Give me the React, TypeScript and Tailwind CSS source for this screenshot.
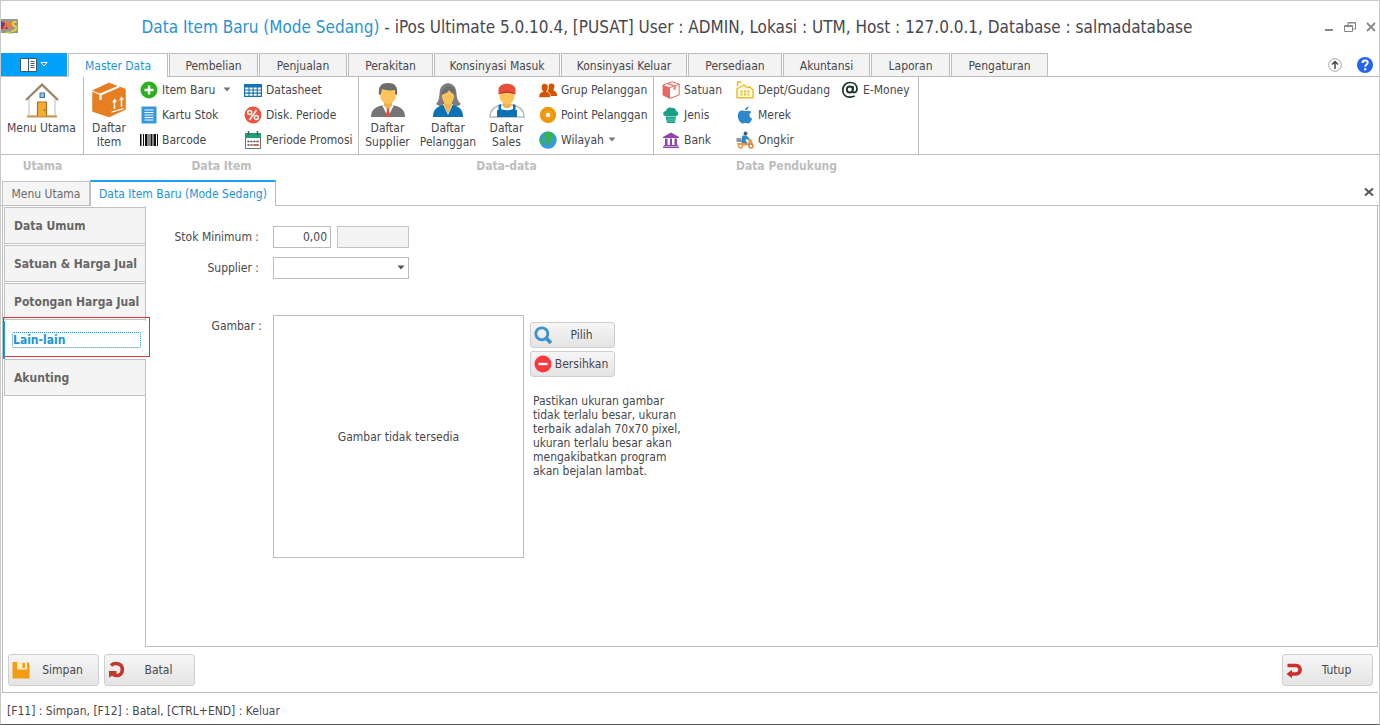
import type { ReactNode } from "react";
import { clsx } from "clsx";

/* ---------- icons ---------- */

function HomeIcon() {
  return (
    <svg viewBox="0 0 36 36" className="size-9" aria-hidden="true">
      <path d="M5 16v18h26V16L18 4z" fill="#fff" stroke="#b9bcc2" />
      <path d="M3 34.500h30" stroke="#c99a4b" strokeWidth="2" />
      <path d="M2 18 18 2.500 34 18" fill="none" stroke="#9c8468" strokeWidth="2.200" />
      <rect x="16" y="11" width="4.500" height="4.500" fill="#8fc4e6" stroke="#4d6f88" />
      <path d="M13.500 34V20h9v14" fill="#f6ad2f" stroke="#a9742a" strokeWidth="1.200" />
      <circle cx="20.500" cy="28" r=".8" fill="#7a5016" />
    </svg>
  );
}

function BoxIcon() {
  return (
    <svg viewBox="0 0 36 36" className="size-9" aria-hidden="true">
      <path d="M18 1.500 34 7.500V27L18 34.500 2 29V9z" fill="#e67e22" stroke="#e67e22" strokeWidth="1.500" strokeLinejoin="round" />
      <path d="M9.500 18v-5.500L28 4.500" fill="none" stroke="#fff" strokeWidth="2.200" />
      <path d="m1 9 8.500 3.500" stroke="#fff" strokeWidth="1.200" />
      <path d="M23.500 27v-8M30.500 25v-8" stroke="#fff" strokeWidth="1.500" />
      <path d="m21 20.500 2.500-4 2.500 3zM28 18.500l2.500-4 2.500 3zM20.500 29.500l12-3.500v1.300l-12 3.500z" fill="#fff" />
    </svg>
  );
}

function SupplierIcon() {
  return (
    <svg viewBox="0 0 36 36" className="size-9" aria-hidden="true">
      <path d="M1 35c0-8 5-10 12-12h10c7 2 12 4 12 12z" fill="#737577" />
      <path d="m12 23 6 12 6-12z" fill="#fff" />
      <path d="M16 25h4l-1 3 1.500 7h-5L17 28z" fill="#e04f3a" />
      <path d="M14 18h8v6l-4 3-4-3z" fill="#f1b04c" />
      <ellipse cx="18" cy="13" rx="8" ry="9" fill="#fdc45c" />
      <path d="M9 13C8 4 11 1 18 1s10 3 9 12l-2-1V8c-5 1-10 0-13-1l-1 5z" fill="#6a6d70" />
    </svg>
  );
}

function CustomerIcon() {
  return (
    <svg viewBox="0 0 36 36" className="size-9" aria-hidden="true">
      <path d="M6 22c4-4 3-9 4-14 2-9 14-9 16 0 1 5 0 10 5 14-3 3-7 3-9 1h-8c-2 2-6 1-8-1z" fill="#7c7e80" />
      <path d="M3 35c0-8 4-10 10-12h10c6 2 10 4 10 12z" fill="#0a72b5" />
      <path d="m13 22 5 11 5-11z" fill="#fff" />
      <path d="M14 18h8v6l-4 8-4-8z" fill="#f3b552" />
      <ellipse cx="18" cy="14" rx="6" ry="8" fill="#fdc45c" />
      <path d="M11 13C12 5 16 4 20 4c4 1 6 4 5 9-3-2-5-3-6-5-1 3-5 4-8 5z" fill="#6d6f71" />
    </svg>
  );
}

function SalesIcon() {
  return (
    <svg viewBox="0 0 36 36" className="size-9" aria-hidden="true">
      <path d="M1 35c0-8 5-11 12-12h10c7 1 12 4 12 12z" fill="#fff" stroke="#b7bcc2" strokeWidth="1.500" />
      <path d="M8 35V28h1.500v-5l2.500-1v5c3 1.500 9 1.500 12 0v-5l2.500 1v5H28v7z" fill="#0a72b5" />
      <path d="M14 18h8v6c-2 3-6 3-8 0z" fill="#f1b04c" />
      <ellipse cx="18" cy="14" rx="7.500" ry="8.500" fill="#fdc45c" />
      <path d="M9.500 11V7C11 0 25 0 26.500 7v4c-5-1.500-12-1.500-17 0z" fill="#e8503a" />
      <path d="M9.500 11c5-2 12-2 17 0v1.500c-5-2-12-2-17 0z" fill="#c23b28" />
    </svg>
  );
}

function AddIcon() {
  return (
    <svg viewBox="0 0 18 18" className="size-[18px]" aria-hidden="true">
      <circle cx="9" cy="9" r="8.500" fill="#2cb01d" />
      <path d="M9 4.500v9M4.500 9h9" stroke="#fff" strokeWidth="2.400" />
    </svg>
  );
}

function StockCardIcon() {
  return (
    <svg viewBox="0 0 18 18" className="size-[18px]" aria-hidden="true">
      <path d="M1.500.5h15v17h-15z" fill="#3498db" />
      <path d="M4.500 4h9M4.500 6.500h9M4.500 9h9M4.500 11.500h9M4.500 14h9" stroke="#fff" />
    </svg>
  );
}

function BarcodeIcon() {
  return (
    <svg viewBox="0 0 18 18" className="size-[18px]" aria-hidden="true">
      <path d="M0 3h1.500v12H0zM3 3h1v12H3zM5 3h2.500v12H5zM8.500 3h1v12h-1zM10.500 3h2v12h-2zM13.500 3H16v12h-2.500zM17 3h1v12h-1z" fill="#111" />
    </svg>
  );
}

function DatasheetIcon() {
  return (
    <svg viewBox="0 0 18 18" className="size-[18px]" aria-hidden="true">
      <path d="M0 3h18v13H0z" fill="#1272b4" />
      <path
        d="M1.200 6.500h3.300v2H1.200zM5.600 6.500h3v2h-3zM9.700 6.500h3v2h-3zM13.800 6.500h3v2h-3zM1.200 9.600h3.300v2H1.200zM5.600 9.600h3v2h-3zM9.700 9.600h3v2h-3zM13.800 9.600h3v2h-3zM1.200 12.700h3.300v2H1.200zM5.600 12.700h3v2h-3zM9.700 12.700h3v2h-3zM13.800 12.700h3v2h-3z"
        fill="#fff"
      />
    </svg>
  );
}

function DiscountIcon() {
  return (
    <svg viewBox="0 0 18 18" className="size-[18px]" aria-hidden="true">
      <circle cx="9" cy="9" r="8.500" fill="#ea5440" />
      <path d="M12.500 4 5.500 14" stroke="#fff" strokeWidth="1.500" />
      <circle cx="5.700" cy="6.500" r="2" fill="none" stroke="#fff" strokeWidth="1.400" />
      <circle cx="12.300" cy="11.500" r="2" fill="none" stroke="#fff" strokeWidth="1.400" />
    </svg>
  );
}

function CalendarIcon() {
  return (
    <svg viewBox="0 0 18 18" className="size-[18px]" aria-hidden="true">
      <path d="M1.500 2.500h15v15h-15z" fill="#fff" stroke="#6b6f73" />
      <path d="M1 2h16v5H1z" fill="#1f9d74" />
      <path d="M4.500 0v4M13.500 0v4" stroke="#555" strokeWidth="1.500" />
      <path d="M3.500 10.500h11M3.500 14h11" stroke="#444" strokeWidth="1.600" strokeDasharray="2 1" />
      <path d="M12.500 9.700h2v1.600h-2zM9.500 13.200h5v1.600h-5z" fill="#e2503c" />
    </svg>
  );
}

function GroupIcon() {
  return (
    <svg viewBox="0 0 18 18" className="size-[18px]" aria-hidden="true">
      <path d="M10 15c0-3-.5-4-2-5 2-1 1.500-2 1.500-5 0-3.500 6-3.500 6 0 0 2.500-1.500 3-1 4.500 2 1 3.500 1.500 3.500 5.500z" fill="#d35400" />
      <path d="M0 16.500c0-4 1-5 4-6-2-2-1.500-3-1.500-5 0-4 6.500-4 6.500 0 0 2 0 3.500-1.500 5 3 1 4 2 4 6z" fill="#d35400" stroke="#fff" strokeWidth=".6" />
    </svg>
  );
}

function PointIcon() {
  return (
    <svg viewBox="0 0 18 18" className="size-[18px]" aria-hidden="true">
      <circle cx="9" cy="9" r="8.200" fill="#f39c12" />
      <circle cx="9" cy="9" r="6" fill="none" stroke="#e48d08" />
      <circle cx="9" cy="9" r="2.200" fill="#fff" />
    </svg>
  );
}

function GlobeIcon() {
  return (
    <svg viewBox="0 0 18 18" className="size-[18px]" aria-hidden="true">
      <circle cx="9" cy="9" r="8.700" fill="#379bdb" />
      <path d="M6 2c3-1.500 7-.5 9 2l-2 2 1 3-3 1-1 5-3-3-1-3 1-2-3-2z" fill="#36b44a" />
      <path d="M1 7l2 1 1 3-1 3C1 12 0 10 1 7z" fill="#36b44a" />
    </svg>
  );
}

function UnitIcon() {
  return (
    <svg viewBox="0 0 18 18" className="size-[18px]" aria-hidden="true">
      <path d="M1 4 10 .8 17.200 3v11L8 17.400 1 14z" fill="#fff" stroke="#e8685f" strokeLinejoin="round" />
      <path d="m1 4 7 2.500v11L1 14z" fill="#e8685f" />
      <path d="m8 6.500 9-3" stroke="#e8685f" />
      <path d="m4 3 7.500 2.600v3.600l2.500-.9V4.700L7 2z" fill="#f08a80" />
    </svg>
  );
}

function KindIcon() {
  return (
    <svg viewBox="0 0 18 18" className="size-[18px]" aria-hidden="true">
      <path d="M3 10C0 9 1 5 4 5c0-3 4-4.500 6-3 3-.5 4 1 4 3 3 .5 3 5 0 5z" fill="#16a085" />
      <path d="M3.500 10.500h10.500L13 17H5z" fill="#16a085" />
      <path d="M6 12v4M8 12v4M10 12v4M12 12v4" stroke="#8ed3c5" strokeWidth=".7" />
    </svg>
  );
}

function BankIcon() {
  return (
    <svg viewBox="0 0 18 18" className="size-[18px]" aria-hidden="true">
      <path d="M1 7V6l8-4.500L17 6v1zM3 7.500h2.500V14H3zM8 7.500h2V14H8zM12.500 7.500H15V14h-2.500zM2 14h14v1H2zM1 15.500h16V17H1z" fill="#8e44ad" />
    </svg>
  );
}

function WarehouseIcon() {
  return (
    <svg viewBox="0 0 18 18" className="size-[18px]" aria-hidden="true">
      <path d="M1 16.800V8l7-4 3.500 2.500L14 6l3 3v7.800z" fill="#fffbe6" stroke="#e9bd1f" strokeWidth="1.400" />
      <path d="M1.500 5.500V1h4" fill="none" stroke="#e9bd1f" strokeWidth="1.500" />
      <path d="M4.500 10.500h10M4.500 13.500h10" stroke="#e9bd1f" strokeWidth="2" strokeDasharray="2 1.500" />
    </svg>
  );
}

function AppleIcon() {
  return (
    <svg viewBox="0 0 18 18" className="size-[18px]" aria-hidden="true">
      <path d="M12.500.5c0 2-1.500 3.700-3.500 3.700 0-2 1.500-3.500 3.500-3.700z" fill="#2e87c8" />
      <path d="M9.300 5.300c1-.5 2-.8 3.200-.6 1.300.2 2.200.8 2.800 1.600-2.700 1.700-2.200 5.200.8 6.400-.8 2.300-2.200 4.600-3.800 4.800-1 .1-1.500-.6-2.900-.6s-1.900.7-2.900.6C4 17.200 1.800 13 1.800 9.800c0-3.300 2-5.200 4.200-5.200 1.400 0 2.300.7 3.300.7z" fill="#2e87c8" />
    </svg>
  );
}

function ScooterIcon() {
  return (
    <svg viewBox="0 0 18 18" className="size-[18px]" aria-hidden="true">
      <circle cx="9.500" cy="2.500" r="2" fill="#4a5a68" />
      <path d="M6.500 4.500h4l3 3-1 1.500-2.500-1-.5 1.500 2.500 3.500H8l-3-2z" fill="#2e87c8" />
      <path d="M.5 7h4.500v4H.5z" fill="#8a97a3" />
      <path d="M1 12h8l3 1 1-5h2l2 5v1.500H2z" fill="#e9964a" />
      <circle cx="4.500" cy="15" r="2" fill="#fff" stroke="#e9964a" strokeWidth="1.400" />
      <circle cx="15" cy="15" r="2" fill="#fff" stroke="#d9813a" strokeWidth="1.400" />
    </svg>
  );
}

function AtIcon() {
  return (
    <svg viewBox="0 0 18 18" className="size-[18px]" fill="none" stroke="#17332d" aria-hidden="true">
      <circle cx="8.800" cy="8.500" r="3" strokeWidth="1.800" />
      <path d="M12.200 5.200 11.600 10c-.3 2.500 4.400 2 4.400-2 0-4-3-6.500-7-6.500S1.800 4.500 1.800 9s3 7.200 7.200 7.200c2 0 3.500-.5 4.700-1.300" strokeWidth="1.700" />
    </svg>
  );
}

function SearchIcon() {
  return (
    <svg viewBox="0 0 18 18" className="size-[18px]" fill="none" stroke="#3c92cd" aria-hidden="true">
      <circle cx="7.800" cy="7.800" r="6" strokeWidth="2.800" />
      <path d="m12 12 5 5" strokeWidth="3.800" />
    </svg>
  );
}

function RemoveIcon() {
  return (
    <svg viewBox="0 0 18 18" className="size-[18px]" aria-hidden="true">
      <circle cx="9" cy="9" r="8.500" fill="#fb3a3f" />
      <path d="M4.500 9h9" stroke="#fff" strokeWidth="2.400" />
    </svg>
  );
}

function SaveIcon() {
  return (
    <svg viewBox="0 0 18 18" className="size-[18px]" aria-hidden="true">
      <path d="M.5 1h15L17.500 3v14.500H.5z" fill="#f39c12" />
      <path d="M5 1h10v7.500H5z" fill="#fde9c8" />
      <path d="M10.500 2h2.500v5h-2.500z" fill="#f39c12" />
    </svg>
  );
}

function UndoIcon() {
  return (
    <svg viewBox="0 0 18 18" className="size-[18px]" aria-hidden="true">
      <path d="M3 4.500C6 1.500 14.300 1.500 14.300 8.500S8 15.500 4.500 13" fill="none" stroke="#c0392b" strokeWidth="3.600" />
      <path d="M1 10h7.500v3l-3 1-4.500 2.500z" fill="#c0392b" />
    </svg>
  );
}

function ReturnIcon() {
  return (
    <svg viewBox="0 0 18 18" className="size-[18px]" aria-hidden="true">
      <path d="M1.500 4.500H10c5.500 0 5.500 8.500 0 8.500H4.500" fill="none" stroke="#c9302c" strokeWidth="3.600" />
      <path d="M.500 13 6 8.800v8.400z" fill="#c9302c" />
    </svg>
  );
}

function Caret({ className }: { className?: string }) {
  return (
    <svg viewBox="0 0 8 5" className={clsx("h-[5px] w-2 fill-current", className)} aria-hidden="true">
      <path d="M.5.5h7L4 4.500z" />
    </svg>
  );
}

function AppLogo() {
  return (
    <svg viewBox="0 0 18 16" className="h-4 w-[18px]" aria-hidden="true">
      <path d="M0 0h17v14H0z" fill="#9b958c" />
      <path d="M0 2l4 2 3 6H0z" fill="#c2265a" />
      <path d="M0 3l3 1v3H0z" fill="#4b49b8" />
      <path d="M3 10 6 3l3 5 2-5 2 3" fill="none" stroke="#ef7f2c" strokeWidth="1.800" />
      <path d="M15.500 3c-4-1-5 3-2 4s2 5-3 5" fill="none" stroke="#e8d23e" strokeWidth="2" />
      <path d="M4 14c3-3 6-2 8 1z" fill="#b5cf4c" />
    </svg>
  );
}

/* ---------- ribbon ---------- */

const RIBBON_TABS = [
  { label: "Pembelian", width: "w-[89px]" },
  { label: "Penjualan", width: "w-[88px]" },
  { label: "Perakitan", width: "w-[85px]" },
  { label: "Konsinyasi Masuk", width: "w-[126px]" },
  { label: "Konsinyasi Keluar", width: "w-[126px]" },
  { label: "Persediaan", width: "w-[94px]" },
  { label: "Akuntansi", width: "w-[87px]" },
  { label: "Laporan", width: "w-[79px]" },
  { label: "Pengaturan", width: "w-[97px]" },
];

interface RibbonGroupProps {
  title: string;
  width: string;
  children: ReactNode;
}

function RibbonGroup({ title, width, children }: RibbonGroupProps) {
  return (
    <section className={clsx("shrink-0 pb-[3px]", width)}>
      <div className="flex h-[78px] border-r border-b border-[#bcbcbc]">{children}</div>
      <h2 className="text-center text-xs leading-[22px] font-bold text-[#bdbdbd]">{title}</h2>
    </section>
  );
}

interface BigButtonProps {
  icon: ReactNode;
  width: string;
  children: ReactNode;
}

function BigButton({ icon, width, children }: BigButtonProps) {
  return (
    <button type="button" className={clsx("flex flex-col items-center pt-[5px] leading-[14px]", width)}>
      {icon}
      <span className="pt-[3px] whitespace-nowrap">{children}</span>
    </button>
  );
}

interface SmallButtonProps {
  icon: ReactNode;
  label: string;
  caret?: string;
}

function SmallButton({ icon, label, caret }: SmallButtonProps) {
  return (
    <button type="button" className="flex h-[25px] items-center gap-1 whitespace-nowrap">
      {icon}
      <span>{label}</span>
      {caret && <Caret className={clsx("text-[#777]", caret)} />}
    </button>
  );
}

function Ribbon() {
  return (
    <div className="flex border-t border-[#bcbcbc]">
      <RibbonGroup title="Utama" width="w-[83px]">
        <BigButton icon={<HomeIcon />} width="w-[81px]">
          Menu Utama
        </BigButton>
      </RibbonGroup>

      <RibbonGroup title="Data Item" width="w-[275px]">
        <BigButton icon={<BoxIcon />} width="w-[50px]">
          Daftar
          <br />
          Item
        </BigButton>
        <div className="w-[104px] pl-[6px]">
          <SmallButton icon={<AddIcon />} label="Item Baru" caret="ml-1" />
          <SmallButton icon={<StockCardIcon />} label="Kartu Stok" />
          <SmallButton icon={<BarcodeIcon />} label="Barcode" />
        </div>
        <div className="pl-[6px]">
          <SmallButton icon={<DatasheetIcon />} label="Datasheet" />
          <SmallButton icon={<DiscountIcon />} label="Disk. Periode" />
          <SmallButton icon={<CalendarIcon />} label="Periode Promosi" />
        </div>
      </RibbonGroup>

      <RibbonGroup title="Data-data" width="w-[295px]">
        <BigButton icon={<SupplierIcon />} width="w-[57px]">
          Daftar
          <br />
          Supplier
        </BigButton>
        <BigButton icon={<CustomerIcon />} width="w-[64px]">
          Daftar
          <br />
          Pelanggan
        </BigButton>
        <BigButton icon={<SalesIcon />} width="w-[53px]">
          Daftar
          <br />
          Sales
        </BigButton>
        <div className="pl-[6px]">
          <SmallButton icon={<GroupIcon />} label="Grup Pelanggan" />
          <SmallButton icon={<PointIcon />} label="Point Pelanggan" />
          <SmallButton icon={<GlobeIcon />} label="Wilayah" caret="ml-0" />
        </div>
      </RibbonGroup>

      <RibbonGroup title="Data Pendukung" width="w-[265px]">
        <div className="w-[82px] pl-2">
          <SmallButton icon={<UnitIcon />} label="Satuan" />
          <SmallButton icon={<KindIcon />} label="Jenis" />
          <SmallButton icon={<BankIcon />} label="Bank" />
        </div>
        <div className="w-[105px]">
          <SmallButton icon={<WarehouseIcon />} label="Dept/Gudang" />
          <SmallButton icon={<AppleIcon />} label="Merek" />
          <SmallButton icon={<ScooterIcon />} label="Ongkir" />
        </div>
        <div>
          <SmallButton icon={<AtIcon />} label="E-Money" />
        </div>
      </RibbonGroup>

      <div className="h-[78px] flex-1 border-b border-[#bcbcbc]" />
    </div>
  );
}

function RibbonTabs() {
  return (
    <nav className="flex h-[23px] items-stretch" aria-label="Ribbon">
      <button type="button" aria-label="File" className="flex w-[66px] items-center justify-center gap-[3px] bg-[#00a2f9]">
        <svg viewBox="0 0 17 14" className="h-[14px] w-[17px]" aria-hidden="true">
          <path d="M.5.5h16v13H.5z" fill="#fff" stroke="#3a5a70" />
          <path d="M8.500 0v14" stroke="#3a5a70" />
          <path d="M10.500 3.500h4M10.500 5.500h4M10.500 7.500h4M10.500 9.500h4" stroke="#555" />
        </svg>
        <svg viewBox="0 0 8 5" className="h-[5px] w-2" aria-hidden="true">
          <path d="M1 .5h6L4 4z" fill="#2f80b5" stroke="#fff" />
        </svg>
      </button>
      <button
        type="button"
        className="relative -mb-px ml-px w-[100px] border-x border-t border-[#bcbcbc] bg-white text-[#1b94d6]"
      >
        Master Data
      </button>
      {RIBBON_TABS.map((tab) => (
        <button
          key={tab.label}
          type="button"
          className={clsx("ml-px border border-b-0 border-[#bcbcbc] bg-[#f3f3f3] pt-px whitespace-nowrap", tab.width)}
        >
          {tab.label}
        </button>
      ))}
      <div className="ml-auto flex items-center gap-[15px] pr-[6px]">
        <button type="button" aria-label="Collapse ribbon">
          <svg viewBox="0 0 14 14" className="size-[14px]" fill="none" aria-hidden="true">
            <circle cx="7" cy="7" r="6.300" stroke="#a5a5a5" />
            <path d="M7 11V4M4 6.500l3-3 3 3" stroke="#444" strokeWidth="1.500" />
          </svg>
        </button>
        <button type="button" aria-label="Help">
          <svg viewBox="0 0 16 16" className="size-4" fill="none" aria-hidden="true">
            <circle cx="8" cy="8" r="8" fill="#2563eb" />
            <path d="M5.500 6c0-3.500 5.200-3.200 5.200-.3 0 1.800-2.500 1.900-2.500 4" stroke="#fff" strokeWidth="2" />
            <circle cx="8.200" cy="12.300" r="1.200" fill="#fff" />
          </svg>
        </button>
      </div>
    </nav>
  );
}

/* ---------- window ---------- */

function TitleBar() {
  return (
    <header className="flex h-[52px] items-center">
      <AppLogo />
      <h1 className="flex-1 pr-2 text-center text-[17px] whitespace-nowrap">
        <span className="text-[#2b93d1]">Data Item Baru (Mode Sedang)</span> - iPos Ultimate 5.0.10.4, [PUSAT] User : ADMIN,
        Lokasi : UTM, Host : 127.0.0.1, Database : salmadatabase
      </h1>
      <div className="flex gap-[9px] pr-[2px]">
        <button type="button" aria-label="Minimize">
          <svg viewBox="0 0 12 12" className="size-3" aria-hidden="true">
            <path d="M2 8h8v2H2z" fill="#888" />
          </svg>
        </button>
        <button type="button" aria-label="Restore">
          <svg viewBox="0 0 12 12" className="size-3" fill="none" stroke="#888" aria-hidden="true">
            <path d="M4 4V1.500h7.500V8H8.500M4 2h7.500M.500 4.500h8v6h-8zM.500 5.500h8" />
          </svg>
        </button>
        <button type="button" aria-label="Close">
          <svg viewBox="0 0 12 12" className="size-3" aria-hidden="true">
            <path d="m2 2 8 8M10 2l-8 8" stroke="#888" strokeWidth="1.800" />
          </svg>
        </button>
      </div>
    </header>
  );
}

function DocumentTabs() {
  return (
    <div className="flex h-[26px] items-end border-b border-[#bcbcbc] pl-px">
      <button type="button" className="h-6 w-[88px] border border-b-0 border-[#c4c4c4] bg-[#f6f5f6] text-[#6a6a6a]">
        Menu Utama
      </button>
      <button
        type="button"
        className="relative -mb-px h-[26px] w-[186px] border-x border-t-2 border-x-[#bcbcbc] border-t-[#1ba1f2] bg-white text-[#1b94d6]"
      >
        Data Item Baru (Mode Sedang)
      </button>
      <button type="button" aria-label="Close tab" className="mr-[5px] mb-2 ml-auto">
        <svg viewBox="0 0 10 10" className="size-[10px]" aria-hidden="true">
          <path d="m1 1.500 8 7M9 1.500l-8 7" stroke="#555" strokeWidth="2" />
        </svg>
      </button>
    </div>
  );
}

const SIDE_TABS = ["Data Umum", "Satuan & Harga Jual", "Potongan Harga Jual", "Lain-lain", "Akunting"];

function SideTabs({ active }: { active: string }) {
  return (
    <nav
      className="relative z-10 -mr-px flex w-[143px] shrink-0 flex-col pt-px text-xs font-bold text-[#666]"
      aria-label="Data item"
    >
      {SIDE_TABS.map((tab) =>
        tab === active ? (
          <div key={tab} className="relative h-[38px] border-l-2 border-[#1ba1f2] bg-white">
            <button type="button" className="flex h-full w-full items-center pr-[5px] pl-[7px] text-[#1b94d6]">
              <span className="flex-1 rounded-xs border border-dotted border-[#1b94d6] text-left leading-[14px]">{tab}</span>
            </button>
            <div className="pointer-events-none absolute -top-1 -right-1 -left-[2px] h-10 border border-[#d43a3a]" />
          </div>
        ) : (
          <button
            key={tab}
            type="button"
            className="mb-px ml-px h-[37px] border border-[#c2c2c2] bg-[#f5f4f5] pl-[9px] text-left whitespace-nowrap"
          >
            {tab}
          </button>
        ),
      )}
    </nav>
  );
}

interface FormButtonProps {
  icon: ReactNode;
  size: string;
  children: ReactNode;
}

function FormButton({ icon, size, children }: FormButtonProps) {
  return (
    <button
      type="button"
      className={clsx(
        "flex items-center rounded-[3px] border border-[#cfcfcf] bg-linear-to-b from-[#f6f6f6] to-[#e4e4e4] px-[3px]",
        size,
      )}
    >
      {icon}
      <span className="flex-1 text-center">{children}</span>
    </button>
  );
}

function OtherForm() {
  return (
    <main className="min-w-0 flex-1 border-x border-b border-[#bcbcbc] pt-5 pb-5 pl-[27px]">
      <div className="grid grid-cols-[86px_auto] justify-start gap-x-[14px] gap-y-[9px]">
        <label htmlFor="min-stock" className="text-right leading-[22px] whitespace-nowrap">
          Stok Minimum :
        </label>
        <div className="flex gap-[6px]">
          <input
            id="min-stock"
            defaultValue="0,00"
            className="h-[22px] w-[58px] border border-[#bcbcbc] px-[3px] text-right outline-none"
          />
          <input aria-label="Satuan" disabled className="h-[22px] w-[72px] border border-[#c4c4c4] bg-[#f3f3f3]" />
        </div>
        <label htmlFor="supplier" className="text-right leading-[22px]">
          Supplier :
        </label>
        <div className="relative">
          <select id="supplier" className="block h-[22px] w-[136px] appearance-none border border-[#bcbcbc] bg-white">
            <option value="" />
          </select>
          <Caret className="pointer-events-none absolute top-2 right-1 text-[#555]" />
        </div>
      </div>

      <div className="mt-9 flex items-start">
        <span className="w-[89px] pt-[3px] text-right">Gambar :</span>
        <div className="ml-[11px] flex h-[243px] w-[251px] items-center justify-center border border-[#bcbcbc]">
          Gambar tidak tersedia
        </div>
        <div className="ml-[6px] flex w-36 flex-col gap-[3px] pt-[7px]">
          <FormButton icon={<SearchIcon />} size="h-[26px] w-[85px]">
            Pilih
          </FormButton>
          <FormButton icon={<RemoveIcon />} size="h-[26px] w-[85px]">
            Bersihkan
          </FormButton>
          <p className="pt-[14px] pl-[3px] leading-[14px] whitespace-nowrap">
            Pastikan ukuran gambar
            <br />
            tidak terlalu besar, ukuran
            <br />
            terbaik adalah 70x70 pixel,
            <br />
            ukuran terlalu besar akan
            <br />
            mengakibatkan program
            <br />
            akan bejalan lambat.
          </p>
        </div>
      </div>
    </main>
  );
}

export default function App() {
  return (
    <div className="flex min-h-screen flex-col border-x border-t border-b border-[#c9c9c9] border-b-[#555] bg-white font-['DejaVu_Sans_Condensed','Noto_Sans',sans-serif] text-xs text-[#47474d]">
      <TitleBar />
      <RibbonTabs />
      <Ribbon />
      <DocumentTabs />
      <div className="mr-px ml-px flex flex-1 flex-col border-b border-l border-[#bcbcbc]">
        <div className="flex flex-1">
          <SideTabs active="Lain-lain" />
          <OtherForm />
        </div>
        <div className="flex items-center gap-[5px] px-[5px] pt-[7px] pb-[6px]">
          <FormButton icon={<SaveIcon />} size="h-8 w-[91px]">
            Simpan
          </FormButton>
          <FormButton icon={<UndoIcon />} size="h-8 w-[91px]">
            Batal
          </FormButton>
          <div className="ml-auto">
            <FormButton icon={<ReturnIcon />} size="h-8 w-[91px]">
              Tutup
            </FormButton>
          </div>
        </div>
      </div>
      <footer className="h-[31px] pt-[6px] pl-[6px] leading-6">[F11] : Simpan, [F12] : Batal, [CTRL+END] : Keluar</footer>
    </div>
  );
}
